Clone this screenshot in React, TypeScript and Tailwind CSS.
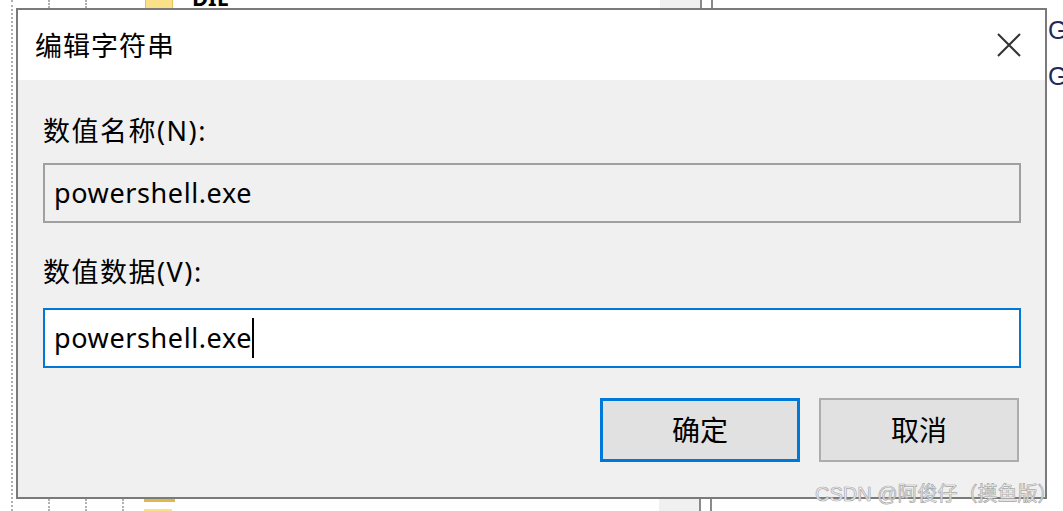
function Dotted({ h }: { h: string }) {
  return <div className={`border-l-2 border-dotted border-[#b0b0b0] ${h}`} />;
}

export default function App() {
  return (
    <div className="w-[1063px] h-[511px] overflow-hidden bg-white font-['Noto_Sans','Noto_Sans_CJK_SC',sans-serif] text-black flex">
      {/* left gutter of the window behind */}
      <div className="w-[16px] shrink-0 flex pl-[11px]">
        <div className="h-full border-l-2 border-dotted border-[#b0b0b0]" />
      </div>

      {/* middle column: strip behind, dialog, strip behind */}
      <div className="w-[1031px] shrink-0 flex flex-col">
        <div className="h-[8px] shrink-0 flex items-stretch">
          <div className="ml-[32px] h-full border-l-2 border-dotted border-[#b0b0b0]" />
          <div className="ml-[35px] h-full border-l-2 border-dotted border-[#b0b0b0]" />
          <div className="ml-[58px] w-[28px] bg-[#fbe08a] border-x border-[#e8c25a]" />
          <div className="ml-[19px] w-[80px] overflow-hidden relative">
            <span className="absolute left-0 top-[-14px] text-[22px] font-bold leading-none">DIE</span>
          </div>
          <div className="ml-[388px] w-[40px] bg-[#f0f0f0]" />
          <div className="border-l-2 border-[#8a8a8a]" />
          <div className="ml-[9px] border-l-2 border-[#8a8a8a]" />
        </div>

        {/* dialog */}
        <div className="h-[491px] shrink-0 border-2 border-[#7a7a7a] bg-[#f0f0f0] flex flex-col">
          <div className="h-[70px] shrink-0 bg-white flex items-center justify-between pl-[17px] pr-[22px]">
            <span className="text-[27px] leading-none tracking-[1px]">编辑字符串</span>
            <svg width="28" height="28" viewBox="0 0 28 28">
              <path d="M3 3 L25 25 M25 3 L3 25" stroke="#333" strokeWidth="2" fill="none" />
            </svg>
          </div>
          <div className="flex-1 flex flex-col pl-[25px] pr-[24px] pt-[33px]">
            <div className="text-[27px] leading-[36px] h-[36px] tracking-[1.5px]">数值名称(N):</div>
            <div className="mt-[14px] h-[60px] border-2 border-[#a0a0a0] bg-[#f0f0f0] flex items-center pl-[9px] text-[27px] tracking-[0.6px]">
              powershell.exe
            </div>
            <div className="mt-[31px] text-[27px] leading-[36px] h-[36px] tracking-[1.5px]">数值数据(V):</div>
            <div className="mt-[18px] h-[60px] border-2 border-[#0078d7] bg-white flex items-center pl-[9px] text-[27px] tracking-[0.6px]">
              <span>powershell.exe</span>
              <span className="w-[2px] h-[40px] bg-black" />
            </div>
            <div className="mt-[30px] flex justify-end gap-[19px] pr-[2px]">
              <button className="w-[200px] h-[64px] border-[3px] border-[#0078d7] bg-[#e1e1e1] text-[28px] flex items-center justify-center">
                确定
              </button>
              <button className="w-[200px] h-[64px] border-2 border-[#adadad] bg-[#e1e1e1] text-[28px] flex items-center justify-center">
                取消
              </button>
            </div>
          </div>
        </div>

        <div className="h-[12px] shrink-0 flex items-stretch">
          <div className="ml-[32px]"><Dotted h="h-full" /></div>
          <div className="ml-[35px]"><Dotted h="h-full" /></div>
          <div className="ml-[35px]"><Dotted h="h-full" /></div>
          <div className="ml-[20px] w-[31px] flex flex-col justify-between">
            <div className="h-[3px] bg-[#e0b84a]" />
            <div className="h-[2px] w-[28px] bg-[#fbe08a]" />
          </div>
          <div className="ml-[484px] w-[40px] bg-[#f0f0f0]" />
          <div className="border-l-2 border-[#8a8a8a]" />
          <div className="ml-[9px] border-l-2 border-[#8a8a8a]" />
        </div>
      </div>

      {/* right column of the window behind */}
      <div className="flex-1 flex flex-col gap-[20px] pt-[17px] pl-[1px] text-[25px] leading-[26px] text-[#1f2a5c] font-['Liberation_Sans',sans-serif]">
        <span>G</span>
        <span>G</span>
      </div>

      {/* watermark over everything */}
      <div className="absolute left-[815px] top-[481px] text-[20px] leading-[26px] text-[#f6f6f6] font-['Liberation_Sans','Noto_Sans_CJK_SC',sans-serif] [-webkit-text-stroke:0.7px_#a8a8a8]">
        CSDN @阿俊仔（摸鱼版）
      </div>
    </div>
  );
}
